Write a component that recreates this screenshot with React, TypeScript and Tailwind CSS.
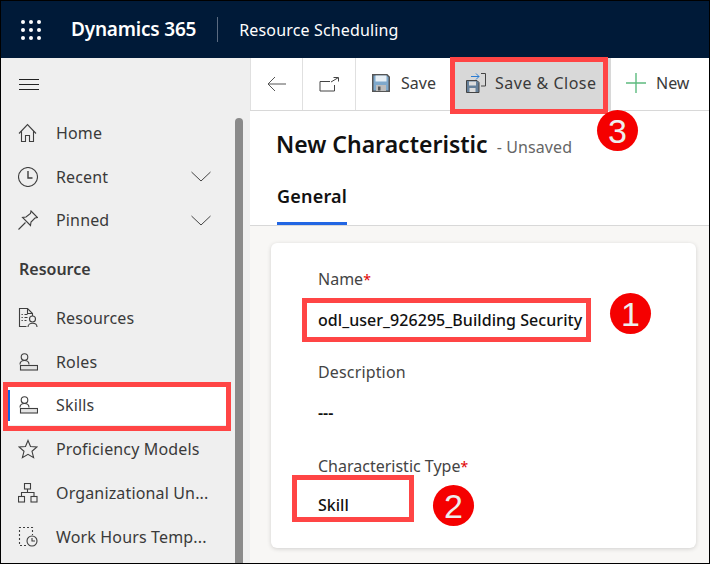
import React from "react";

const st = { fill: "none", stroke: "#3f3f3f", strokeWidth: 1.1 };
const Ico = ({ children, w = 20, h = 20 }: { children: React.ReactNode; w?: number; h?: number }) => (
  <svg width={w} height={h} viewBox={`0 0 ${w} ${h}`} {...st}>{children}</svg>
);
const Chevron = () => (
  <svg width="20" height="11" viewBox="0 0 20 11" fill="none" stroke="#444" strokeWidth="1"><path d="M0.5 1 L10 10 L19.5 1" /></svg>
);
const Home = () => <Ico><path d="M1 10.5 L9.5 1.5 L18 10.5 M3.5 8.5 V18.5 H7.5 V12.5 H11.5 V18.5 H15.5 V8.5" /></Ico>;
const Clock = () => <Ico><circle cx="10" cy="10" r="9.5" /><path d="M10 4 V11 H14.5" strokeWidth="1.4" /></Ico>;
const Pin = () => <Ico><path d="M13 1 L19.5 7.5 L17 8 L13 12 L12.5 15.5 L4.5 7.5 L8 7 L12.5 3.5 Z M7.5 12.5 L0.5 19.5" /></Ico>;
const ResourcesI = () => <Ico><path d="M8.5 18.5 H1.5 V0.5 H9.5 L14.5 5.5 V8 M9.5 0.5 V5.5 H14.5 M6.5 6.5 H9.5 M6.5 9.5 H9.5 M6.5 12.5 H8.5 M3.5 6.5 H4.8 M3.5 9.5 H4.8 M3.5 12.5 H4.8" /><circle cx="14.5" cy="11" r="3" /><path d="M10 19 C10 14 19 14 19 19" /></Ico>;
const RoleI = () => <Ico><circle cx="6.5" cy="5" r="3.3" /><path d="M2 12.5 C2 9.5 4 8.5 6.5 8.5 C9 8.5 11 9.5 11 12.5" /><rect x="2.5" y="13.5" width="17" height="4.5" fill="#e4e4e4" /></Ico>;
const Star = () => <Ico><path d="M10 1.5 L12.5 7.5 L19 8 L14 12.3 L15.6 18.7 L10 15.3 L4.4 18.7 L6 12.3 L1 8 L7.5 7.5 Z" /></Ico>;
const Org = () => <Ico><rect x="6.5" y="0.5" width="6" height="5.5" /><rect x="0.5" y="13.5" width="6" height="5.5" /><rect x="13" y="13.5" width="6" height="5.5" /><path d="M9.5 6 V9.5 M3.5 13.5 V9.5 H16 V13.5" /></Ico>;
const WorkI = () => <Ico><path d="M8 18.5 H1.5 V0.5 H14.5 V8" strokeDasharray="2 2" /><circle cx="14" cy="14" r="5" /><path d="M14 11 V14 H17" /></Ico>;

const Nav = ({ icon, label, chev }: { icon: React.ReactNode; label: string; chev?: boolean }) => (
  <div className="flex h-[43.6px] shrink-0 items-center pl-[17px]">
    <div className="flex w-[38px] shrink-0">{icon}</div>
    <span className="text-[16px] tracking-[0.15px] text-[#3a3a3a]">{label}</span>
    {chev && <span className="ml-auto mr-[39px] flex"><Chevron /></span>}
  </div>
);

const Box = ({ c }: { c: string }) => <div className={`absolute border-[5px] border-[#ff4545] ${c}`} />;
const Dot = ({ n, c }: { n: number; c: string }) => (
  <div className={`absolute flex h-[41px] w-[41px] items-center justify-center rounded-full bg-[#f50000] text-[34px] leading-none text-[#eeeeee] font-['Liberation_Sans',sans-serif] ${c}`}>{n}</div>
);

export default function App() {
  return (
    <div className="relative flex h-[564px] w-[710px] flex-col overflow-hidden border border-black bg-white font-['Noto_Sans',sans-serif]">
      <header className="flex h-[57px] shrink-0 items-center bg-[#001a38] text-white">
        <svg className="ml-[20px]" width="20" height="20" viewBox="0 0 20 20" fill="#fff">
          {[2, 10, 18].flatMap((y) => [2, 10, 18].map((x) => <circle key={`${x}-${y}`} cx={x} cy={y} r="2" />))}
        </svg>
        <span className="ml-[30px] text-[19px] font-semibold tracking-[-0.2px]">Dynamics 365</span>
        <span className="ml-[21px] h-[25px] w-px bg-[#5a6a80]" />
        <span className="ml-[21px] text-[16px] tracking-[0.15px]">Resource Scheduling</span>
      </header>
      <div className="flex min-h-0 flex-1">
        <aside className="relative flex w-[249px] shrink-0 flex-col bg-[#efefef]">
          <div className="flex h-[53.5px] shrink-0 items-center pb-[2px] pl-[18px]">
            <svg width="20" height="12" viewBox="0 0 20 12" stroke="#222" strokeWidth="1"><path d="M0 1.5 H20 M0 6.5 H20 M0 11.5 H20" /></svg>
          </div>
          <Nav icon={<Home />} label="Home" />
          <Nav icon={<Clock />} label="Recent" chev />
          <Nav icon={<Pin />} label="Pinned" chev />
          <div className="flex h-[53.7px] shrink-0 items-center pl-[18px] text-[16px] font-semibold text-[#3a3a3a]">Resource</div>
          <div className="flex flex-col [&>div]:h-[43.8px]">
            <Nav icon={<ResourcesI />} label="Resources" />
            <Nav icon={<RoleI />} label="Roles" />
            <div className="relative flex items-center">
              <div className="absolute bottom-[6px] left-[7px] top-[6px] z-10 w-[2px] bg-[#0f62e6]" />
              <div className="ml-[7px] mr-[23px] flex h-[40px] w-full items-center bg-white pl-[10px]">
                <div className="flex w-[38px] shrink-0"><RoleI /></div>
                <span className="text-[16px] tracking-[0.15px] text-[#3a3a3a]">Skills</span>
              </div>
            </div>
            <Nav icon={<Star />} label="Proficiency Models" />
            <Nav icon={<Org />} label="Organizational Un..." />
            <Nav icon={<WorkI />} label="Work Hours Temp..." />
          </div>
          <div className="absolute bottom-0 left-[234px] top-[60px] w-2 rounded-t bg-[#8a8a8a]" />
        </aside>
        <main className="flex min-w-0 flex-1 flex-col">
          <div className="flex h-[53px] shrink-0 items-center border-b border-[#d8d8d8] text-[16px] text-[#3a3a3a]">
            <div className="flex h-full w-[53px] items-center justify-center border-x border-[#e0e0e0]">
              <svg width="20" height="16" viewBox="0 0 20 16" fill="none" stroke="#555" strokeWidth="1"><path d="M8 1 L1 8 L8 15 M1 8 H19" /></svg>
            </div>
            <div className="flex h-full w-[53px] items-center justify-center border-r border-[#e0e0e0] bg-white">
              <svg width="20" height="15" viewBox="0 0 20 15" fill="none" stroke="#444" strokeWidth="1"><path d="M11 4.5 H1 V14 H15.5 V8 M12 5 L19 0.8 M14.5 0.5 H19.5 V4.5" /></svg>
            </div>
            <div className="flex h-full w-[98px] items-center pb-[2px] pl-[16px]">
              <svg width="18" height="18" viewBox="0 0 18 18"><path d="M0.75 0.75 H15 L17.25 3 V17.25 H0.75 Z" fill="#7fa9cc" stroke="#555" strokeWidth="1.5" /><rect x="3.5" y="1.5" width="11" height="6" fill="#e8f0f6" /><rect x="4" y="11" width="10" height="6" fill="#bdbdbd" /><rect x="6" y="12.5" width="2.5" height="4" fill="#555" /></svg>
              <span className="ml-[11px]">Save</span>
            </div>
            <div className="flex h-full w-[157px] items-center bg-[#d8d8d8] pb-[2px] pl-[12px]">
              <svg width="20" height="20" viewBox="0 0 20 20" fill="none"><path d="M0.5 7.5 H11 L13 9.5 V19.5 H0.5 Z" fill="#66809a" stroke="#444" /><rect x="3" y="8.5" width="7" height="4" fill="#ddd" /><rect x="3.5" y="15" width="6" height="4" fill="#ddd" /><path d="M5 3.5 H13 M10 0.5 L13 3.5 L10 6.5" stroke="#2b7cd3" /><path d="M15 0.5 H19.5 V13 H15" stroke="#444" /></svg>
              <span className="ml-[9px] tracking-[0.5px]">Save &amp; Close</span>
            </div>
            <div className="flex h-full items-center pb-[2px] pl-[15px]">
              <svg width="20" height="20" viewBox="0 0 20 20" stroke="#5dbb7f" strokeWidth="1.4"><path d="M10 0 V20 M0 10 H20" /></svg>
              <span className="ml-[10px]">New</span>
            </div>
          </div>
          <div className="h-[115px] shrink-0 border-b border-[#d8d8d8] pl-[27px]">
            <div className="-ml-px mt-[15px] flex items-baseline">
              <span className="text-[23px] font-semibold leading-[36px] text-[#111]">New Characteristic</span>
              <span className="ml-[9px] text-[16px] tracking-[0.1px] text-[#666]">- Unsaved</span>
            </div>
            <div className="mt-[22px] w-[70px] border-b-[3px] border-[#2266e3] pb-[14px] text-[18px] font-semibold leading-[24px] tracking-[0.2px] text-[#111]">General</div>
          </div>
          <div className="flex-1 bg-[#f8f7f5] pl-[21px] pr-[13px] pt-[17px]">
            <div className="h-[305px] rounded-md bg-white pl-[47px] pt-[22px] shadow-[0_1px_4px_rgba(0,0,0,0.16)]">
              <div className="h-[28px] text-[16px] leading-[28px] text-[#444]">Name<span className="text-[14px] text-[#e00000]">*</span></div>
              <div className="mt-[13px] h-[28px] text-[16px] font-medium leading-[28px] tracking-[0.05px] text-[#111]">odl_user_926295_Building Security</div>
              <div className="mt-[24px] h-[28px] text-[16px] leading-[28px] tracking-[0.15px] text-[#444]">Description</div>
              <div className="mt-[13px] h-[28px] text-[16px] font-semibold leading-[28px] text-[#111]">---</div>
              <div className="mt-[25px] h-[28px] text-[16px] leading-[28px] text-[#444]">Characteristic Type<span className="text-[14px] text-[#e00000]">*</span></div>
              <div className="mt-[11px] h-[28px] text-[16px] font-medium leading-[28px] text-[#111]">Skill</div>
            </div>
          </div>
        </main>
      </div>
      <Box c="left-[2px] top-[381px] h-[49px] w-[228px]" />
      <Box c="left-[301px] top-[297px] h-[44px] w-[289px]" />
      <Box c="left-[291px] top-[474px] h-[47px] w-[122px]" />
      <Box c="left-[449px] top-[56px] h-[57px] w-[158px]" />
      <Dot n={1} c="left-[609px] top-[292px]" />
      <Dot n={2} c="left-[432px] top-[484px]" />
      <Dot n={3} c="left-[596px] top-[109px]" />
    </div>
  );
}
